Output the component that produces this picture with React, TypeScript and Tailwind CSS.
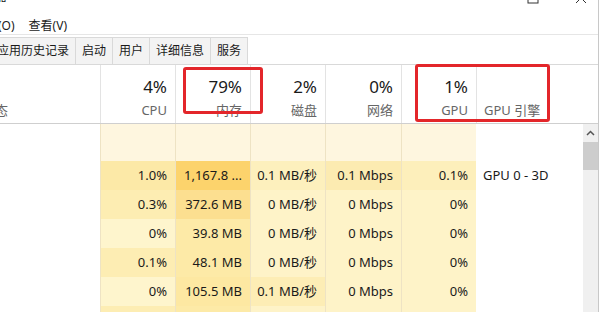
const font = "font-['Noto_Sans','Noto_Sans_CJK_SC',sans-serif]";

type Cell = [string, string];

const rows: { cells: Cell[]; engine?: string }[] = [
  {
    cells: [
      ["1.0%", "bg-[#fce9a7]"],
      ["1,167.8 ...", "bg-[#fcd36c]"],
      ["0.1 MB/秒", "bg-[#fdf0bd]"],
      ["0.1 Mbps", "bg-[#fcebb1]"],
      ["0.1%", "bg-[#fdefbb]"],
    ],
    engine: "GPU 0 - 3D",
  },
  {
    cells: [
      ["0.3%", "bg-[#fdedb2]"],
      ["372.6 MB", "bg-[#fcdf90]"],
      ["0 MB/秒", "bg-[#fef3c8]"],
      ["0 Mbps", "bg-[#fef3c8]"],
      ["0%", "bg-[#fef3c8]"],
    ],
  },
  {
    cells: [
      ["0%", "bg-[#fef5cd]"],
      ["39.8 MB", "bg-[#fdeaa7]"],
      ["0 MB/秒", "bg-[#fef3c8]"],
      ["0 Mbps", "bg-[#fef3c8]"],
      ["0%", "bg-[#fef3c8]"],
    ],
  },
  {
    cells: [
      ["0.1%", "bg-[#fdedb3]"],
      ["48.1 MB", "bg-[#fdeaa7]"],
      ["0 MB/秒", "bg-[#fef3c8]"],
      ["0 Mbps", "bg-[#fef3c8]"],
      ["0%", "bg-[#fef3c8]"],
    ],
  },
  {
    cells: [
      ["0%", "bg-[#fef5cd]"],
      ["105.5 MB", "bg-[#fde8a2]"],
      ["0.1 MB/秒", "bg-[#fdedb5]"],
      ["0 Mbps", "bg-[#fef3c8]"],
      ["0%", "bg-[#fef3c8]"],
    ],
  },
  {
    cells: [
      ["", "bg-[#fdedb3]"],
      ["", "bg-[#fdeaa7]"],
      ["", "bg-[#fef3c8]"],
      ["", "bg-[#fef3c8]"],
      ["", "bg-[#fef3c8]"],
    ],
  },
];

const heads = [
  { pct: "4%", label: "CPU" },
  { pct: "79%", label: "内存" },
  { pct: "2%", label: "磁盘" },
  { pct: "0%", label: "网络" },
  { pct: "1%", label: "GPU" },
];

const grid = "grid grid-cols-[100px_75px_75px_75px_76px_75px_107px]";

const App = () => {
  return (
    <div className={`relative w-[600px] h-[312px] overflow-hidden bg-white text-[#1a1a1a] ${font}`}>
      <div className="flex w-full h-full">
        <div className="flex flex-col w-[598px] min-h-0">
          {/* title strip, mostly cut off */}
          <div className="flex shrink-0 h-[16px] overflow-hidden">
            <span className="text-[12px] leading-[12px] -mt-[9px] -ml-[5px]">器</span>
            <svg width="12" height="12" className="-mt-[8px] ml-[520px]" viewBox="0 0 12 12">
              <rect x="1" y="1" width="10" height="10" fill="none" stroke="#333" strokeWidth="1" />
            </svg>
            <svg width="12" height="12" className="-mt-[8px] ml-[36px]" viewBox="0 0 12 12">
              <path d="M1 1 L11 11 M11 1 L1 11" stroke="#333" strokeWidth="1" />
            </svg>
          </div>

          {/* menu */}
          <div className="flex shrink-0 gap-[14px] h-[19px] pt-[1px] text-[12px] leading-[18px] border-b border-[#e6e6e6] overflow-hidden">
            <span className="-ml-[26px]">选项(O)</span>
            <span>查看(V)</span>
          </div>

          {/* tabs */}
          <div className="flex shrink-0 mt-[2px] h-[28px] border-b border-[#d9d9d9] text-[12px]">
            <div className="flex items-center -ml-[3px] pr-[6px] bg-[#f3f3f3] border-t border-r border-[#d9d9d9]">应用历史记录</div>
            <div className="flex items-center px-[6px] bg-[#f3f3f3] border-t border-r border-[#d9d9d9]">启动</div>
            <div className="flex items-center px-[6px] bg-[#f3f3f3] border-t border-r border-[#d9d9d9]">用户</div>
            <div className="flex items-center px-[6px] bg-[#f3f3f3] border-t border-r border-[#d9d9d9]">详细信息</div>
            <div className="flex items-center px-[6px] bg-[#f3f3f3] border-t border-r border-[#d9d9d9]">服务</div>
          </div>

          {/* column headers */}
          <div className={`${grid} shrink-0 h-[59px] border-b border-[#cfcfcf]`}>
            <div className="flex flex-col justify-end pb-[5px] overflow-hidden">
              <span className="text-[13px] leading-[16px] text-[#666] -ml-[18px]">状态</span>
            </div>
            {heads.map((h) => (
              <div key={h.label} className="flex flex-col items-end pr-[8px] pt-[12px] border-l border-[#e3e3e3]">
                <span className="text-[17px] leading-[20px]">{h.pct}</span>
                <span className="mt-[5px] text-[13px] leading-[16px] text-[#666]">{h.label}</span>
              </div>
            ))}
            <div className="flex flex-col pl-[7px] pt-[37px] border-l border-[#e3e3e3]">
              <span className="text-[13px] leading-[16px] text-[#666]">GPU 引擎</span>
            </div>
          </div>

          {/* body */}
          <div className="flex flex-1 min-h-0 overflow-hidden">
            <div className="flex flex-col w-[583px]">
              <div className={`${grid} shrink-0 h-[37px]`}>
                <div />
                {heads.map((h) => (
                  <div key={h.label} className="bg-[#fef6df] border-l border-[#eee3c4]" />
                ))}
                <div />
              </div>
              {rows.map((r, i) => (
                <div key={i} className={`${grid} shrink-0 h-[29px] text-[13px]`}>
                  <div />
                  {r.cells.map(([t, bg], j) => (
                    <div key={j} className={`flex items-center justify-end pr-[8px] border-l border-[#eee3c4] ${bg}`}>
                      {t}
                    </div>
                  ))}
                  <div className="flex items-center pl-[7px]">{r.engine}</div>
                </div>
              ))}
            </div>
            {/* scrollbar */}
            <div className="flex flex-col w-[15px] bg-[#f0f0f0]">
              <div className="flex items-center justify-center h-[18px]">
                <svg width="9" height="6" viewBox="0 0 9 6">
                  <path d="M1 5 L4.5 1.5 L8 5" fill="none" stroke="#555" strokeWidth="1.5" />
                </svg>
              </div>
              <div className="h-[28px] bg-[#cdcdcd]" />
            </div>
          </div>
        </div>
        <div className="w-[2px] border-l border-[#c8c8c8] bg-white" />
      </div>

      {/* red annotation boxes */}
      <div className="absolute left-[183px] top-[67px] w-[80px] h-[47px] border-[3px] border-[#e3262a] rounded-[3px]" />
      <div className="absolute left-[415px] top-[64px] w-[135px] h-[58px] border-[3px] border-[#e3262a] rounded-[3px]" />
    </div>
  );
};

export default App;
